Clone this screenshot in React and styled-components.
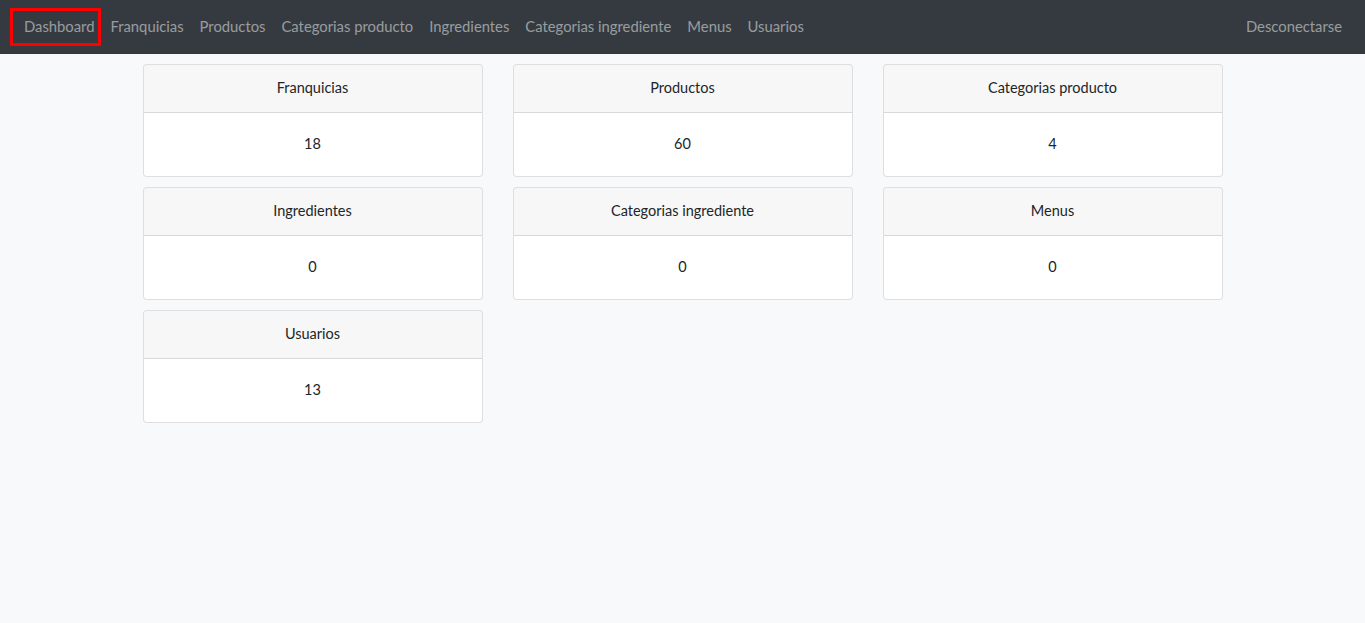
import React from "react";
import styled, { createGlobalStyle } from "styled-components";

const links = [
  "Dashboard",
  "Franquicias",
  "Productos",
  "Categorias producto",
  "Ingredientes",
  "Categorias ingrediente",
  "Menus",
  "Usuarios",
];

const stats = [
  { title: "Franquicias", count: 18 },
  { title: "Productos", count: 60 },
  { title: "Categorias producto", count: 4 },
  { title: "Ingredientes", count: 0 },
  { title: "Categorias ingrediente", count: 0 },
  { title: "Menus", count: 0 },
  { title: "Usuarios", count: 13 },
];

const App = () => {
  return (
    <>
      <GlobalStyle />
      <NavBar>
        <NavList>
          {links.map((link) => (
            <NavLink key={link} $active={link === "Dashboard"}>
              {link}
            </NavLink>
          ))}
        </NavList>
        <NavLink>Desconectarse</NavLink>
      </NavBar>
      <CardGrid>
        {stats.map((stat) => (
          <Card key={stat.title}>
            <CardHeader>{stat.title}</CardHeader>
            <CardBody>{stat.count}</CardBody>
          </Card>
        ))}
      </CardGrid>
    </>
  );
};

const GlobalStyle = createGlobalStyle`
  body {
    margin: 0;
    background-color: #f8f9fa;
    font-family: Lato, "Noto Sans", sans-serif;
    font-size: 15px;
    color: #212529;
  }
`;

const NavBar = styled.nav`
  height: 54px;
  box-sizing: border-box;
  padding: 0 15px 0 16px;
  display: flex;
  align-items: center;
  justify-content: space-between;
  background-color: #343a40;
`;

const NavList = styled.div`
  display: flex;
  align-items: center;
`;

const NavLink = styled.a`
  position: relative;
  padding: 8px;
  margin-bottom: 2px;
  line-height: 20px;
  font-size: 14.8px;
  color: rgba(255, 255, 255, 0.5);
  cursor: pointer;

  &::after {
    content: "";
    display: ${(props) => (props.$active ? "block" : "none")};
    position: absolute;
    left: -6px;
    right: 2px;
    top: 0;
    bottom: -2px;
    border: 3px solid #ff0000;
  }
`;

const CardGrid = styled.main`
  width: 1080px;
  margin: 10px auto 0;
  display: grid;
  grid-template-columns: repeat(3, 340px);
  column-gap: 30px;
  row-gap: 10px;
`;

const Card = styled.div`
  background-color: #fff;
  border: 1px solid rgba(0, 0, 0, 0.125);
  border-radius: 4px;
  overflow: hidden;
  text-align: center;
`;

const CardHeader = styled.div`
  padding: 11px 20px 13px;
  line-height: 23px;
  font-size: 14.5px;
  background-color: rgba(0, 0, 0, 0.03);
  border-bottom: 1px solid rgba(0, 0, 0, 0.125);
`;

const CardBody = styled.div`
  padding: 19px 20px 21px;
  line-height: 23px;
  font-size: 14.5px;
`;

export default App;
